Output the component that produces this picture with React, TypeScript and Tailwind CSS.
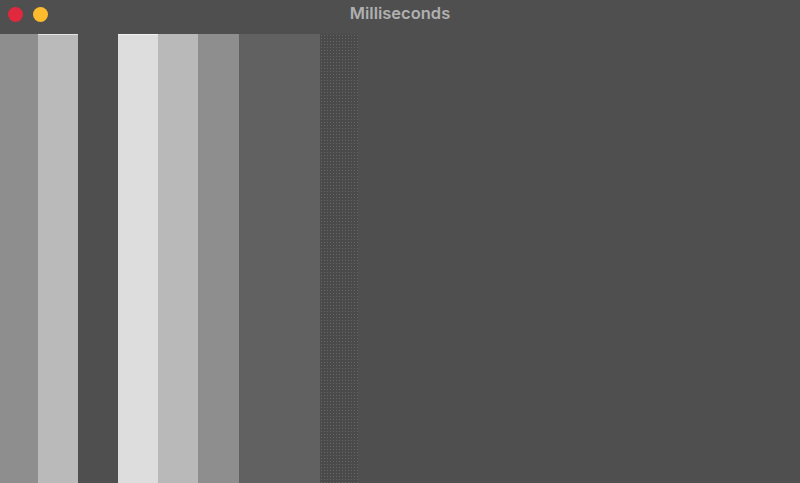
import React from "react";

const bars = [
  { w: "w-[38px]", c: "bg-[#8e8e8e]", top: "" },
  { w: "w-[40px]", c: "bg-[#bababa]", top: "border-t border-[#e4e4e4]" },
  { w: "w-[40px]", c: "bg-[#4f4f4f]", top: "" },
  { w: "w-[40px]", c: "bg-[#dddddd]", top: "border-t border-[#f0f0f0]" },
  { w: "w-[40px]", c: "bg-[#b9b9b9]", top: "" },
  { w: "w-[41px]", c: "bg-[#8e8e8e]", top: "" },
  { w: "w-[81px]", c: "bg-[#616161]", top: "" },
];

export default function App() {
  return (
    <div className="w-[800px] h-[483px] bg-[#4f4f4f] flex flex-col overflow-hidden font-['Inter','Liberation_Sans',sans-serif]">
      {/* title bar */}
      <div className="relative h-[34px] flex items-start pt-[7px] px-[8px] gap-[10px] shrink-0">
        <div className="w-[15px] h-[15px] rounded-full bg-[#e0293f]" />
        <div className="w-[15px] h-[15px] rounded-full bg-[#fdbb2d]" />
        <div className="absolute inset-0 flex items-center justify-center pb-[8px] text-[16.5px] font-semibold text-[#b0b0b0]">
          Milliseconds
        </div>
      </div>
      {/* bars */}
      <div className="flex flex-1">
        {bars.map((b, i) => (
          <div key={i} className={`${b.w} ${b.c} ${b.top} h-full`} />
        ))}
        <div className="w-[38px] h-full bg-[#4a4a4a] bg-[radial-gradient(#666666_0.8px,transparent_1px)] bg-[length:3px_3px]" />
      </div>
    </div>
  );
}
